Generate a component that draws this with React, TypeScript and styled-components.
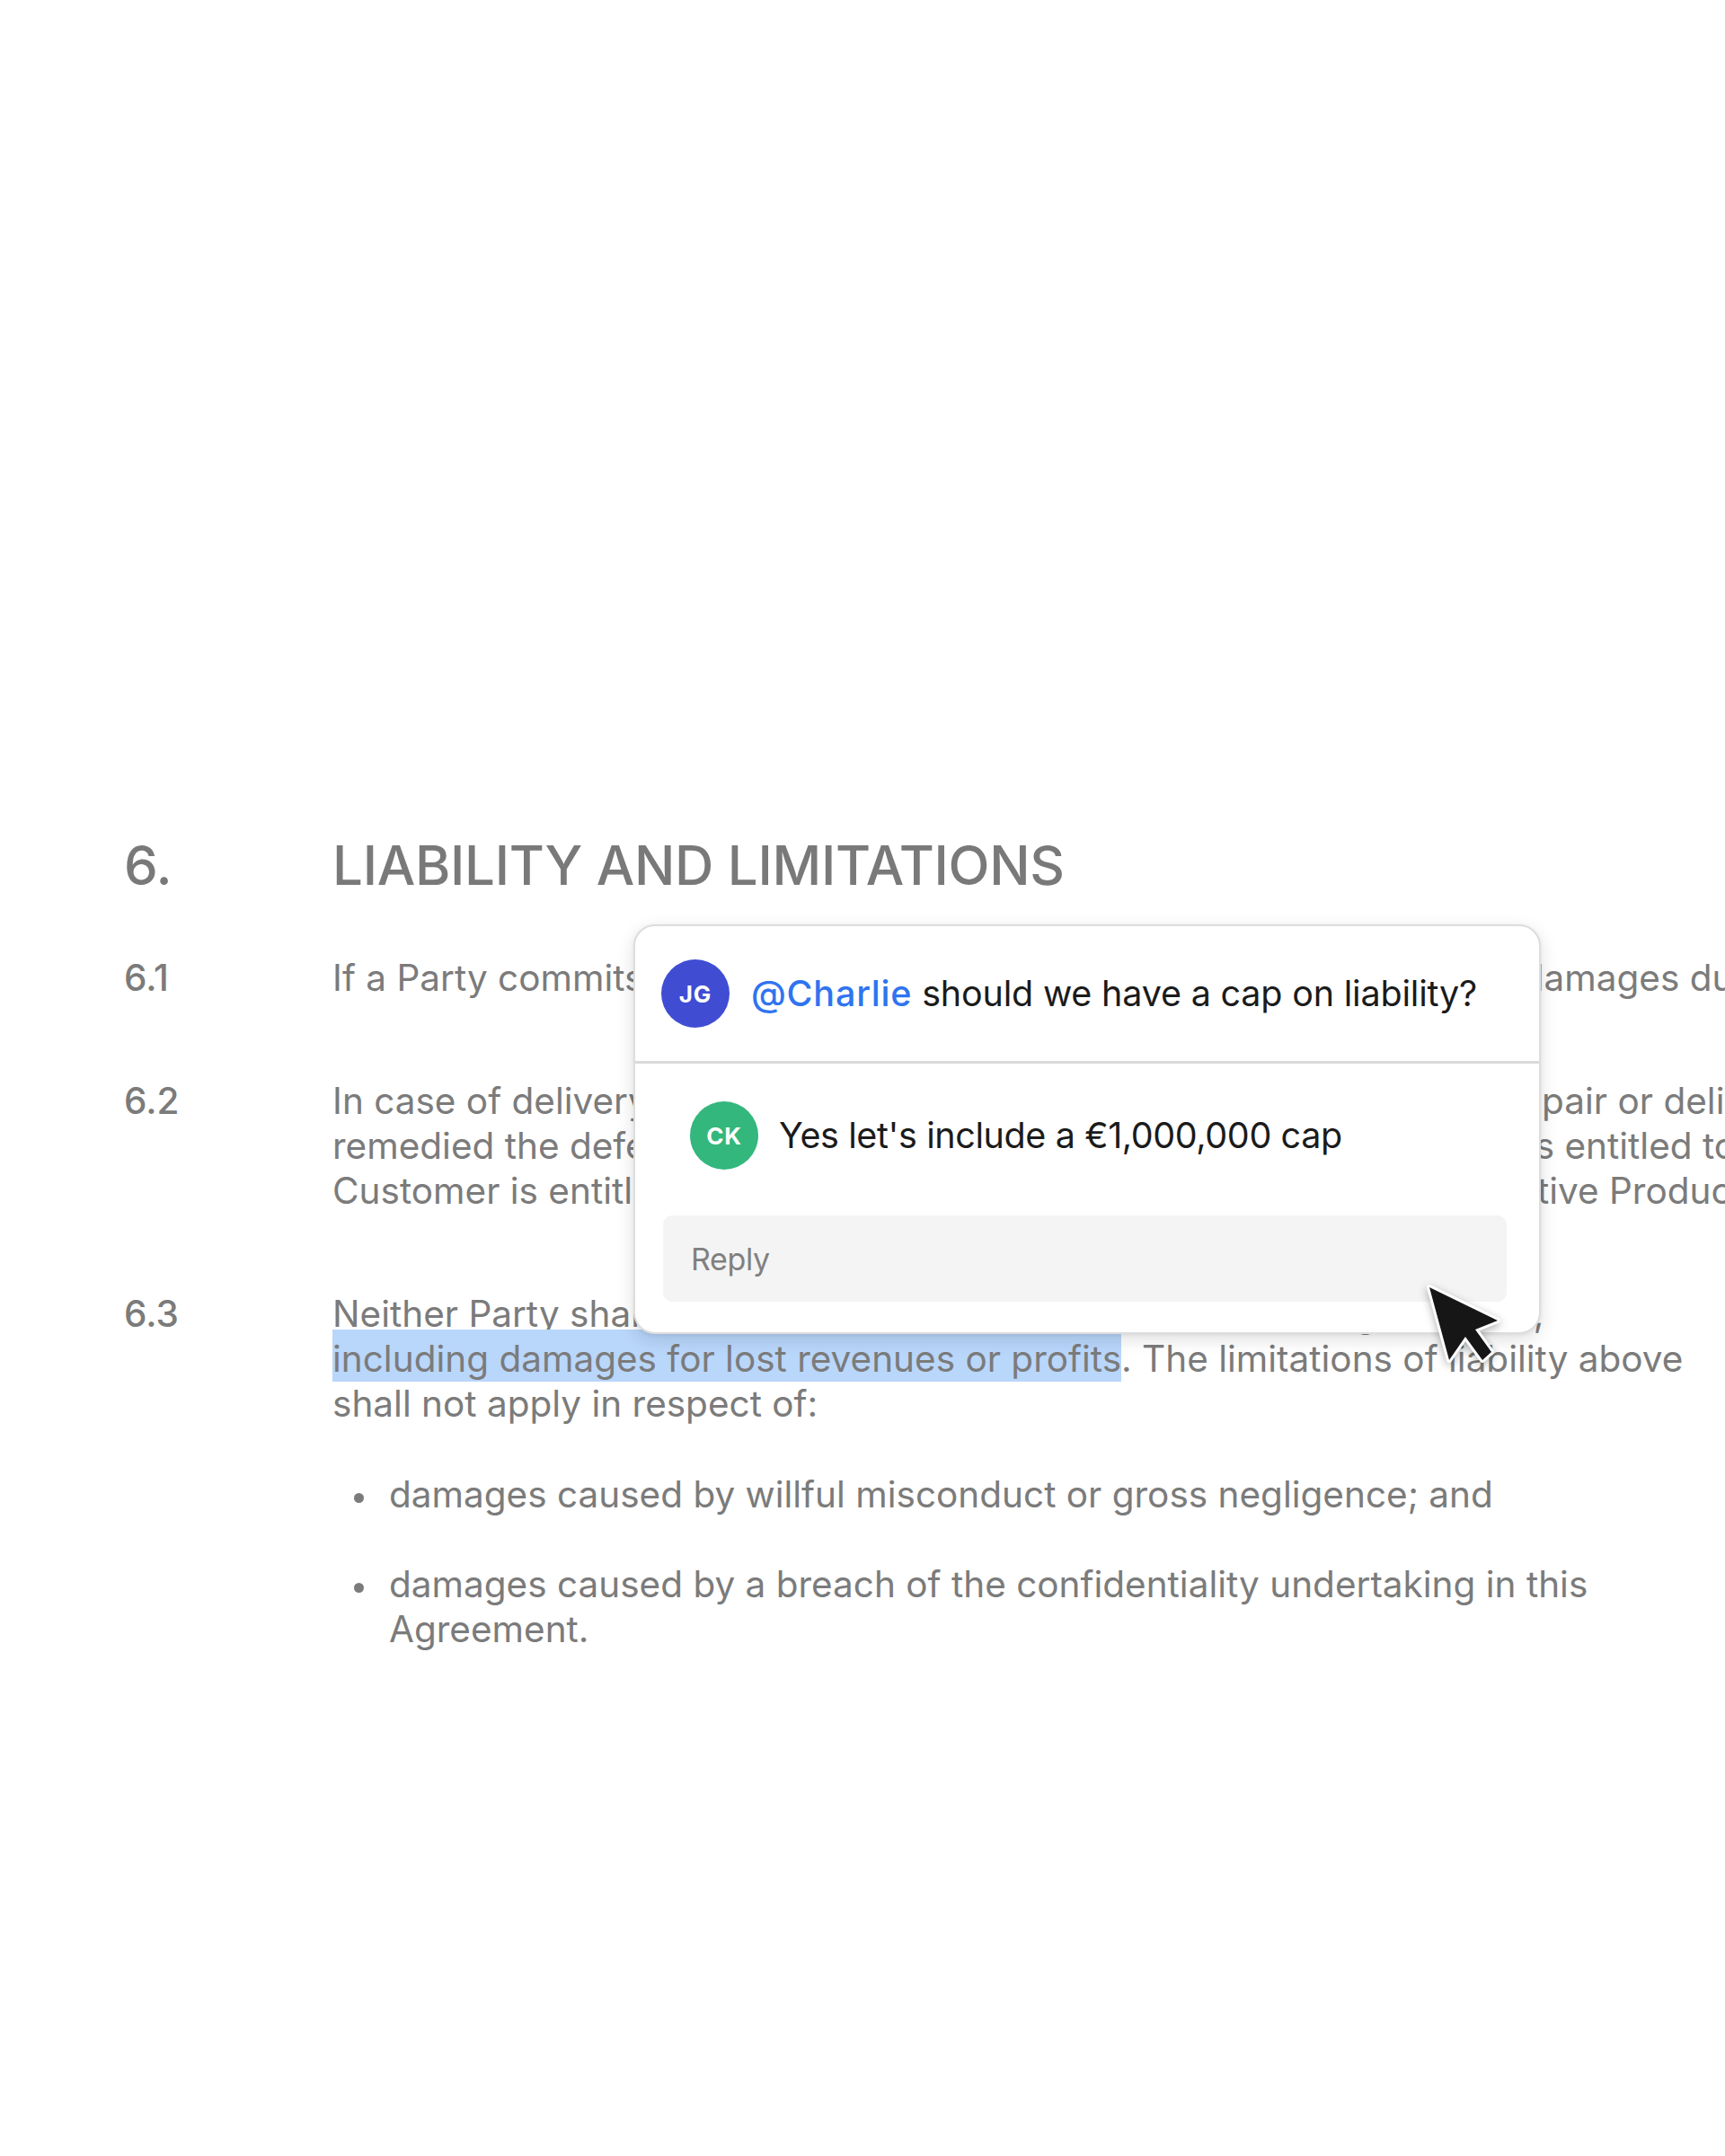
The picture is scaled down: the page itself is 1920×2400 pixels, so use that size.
import React from "react";
import styled, { createGlobalStyle } from "styled-components";

const Global = createGlobalStyle`
  html, body { margin: 0; padding: 0; background: #ffffff; }
  body { font-family: Inter, "Noto Sans", sans-serif; overflow: hidden; }
`;

const Page = styled.div`
  position: relative;
  width: 1920px;
  height: 2400px;
  overflow: hidden;
  background: #ffffff;
`;

const Doc = styled.div`
  padding: 928px 0 0 138px;
  color: #7b7b7b;
`;

const HeadingRow = styled.h1`
  margin: 0;
  display: grid;
  grid-template-columns: 232px max-content;
  font-size: 60px;
  line-height: 70px;
  font-weight: 500;
  color: #797979;
  letter-spacing: -0.005em;
`;

const Clause = styled.section<{ $gap: number }>`
  display: grid;
  grid-template-columns: 232px max-content;
  margin-top: ${(p) => p.$gap}px;
  font-size: 40.5px;
  line-height: 50px;
`;

const ClauseNum = styled.div`
  font-weight: 500;
  color: #7b7b7b;
`;

const ClauseBody = styled.div`
  display: flex;
  flex-direction: column;
`;

const Line = styled.div`
  white-space: nowrap;
`;

const Mark = styled.span`
  background: #b9d6fb;
  padding: 8px 0 1px;
`;

const List = styled.ul`
  list-style: none;
  margin: 51px 0 0;
  padding: 0;
  display: flex;
  flex-direction: column;
  gap: 50px;
`;

const Item = styled.li`
  display: grid;
  grid-template-columns: 63px max-content;
`;

const Dot = styled.span`
  width: 11px;
  height: 11px;
  border-radius: 50%;
  background: #7b7b7b;
  margin: 23px 0 0 24px;
`;

const Card = styled.div`
  position: absolute;
  left: 705px;
  top: 1029px;
  width: 1010px;
  height: 456px;
  box-sizing: border-box;
  border: 2px solid #dddddd;
  border-radius: 24px;
  background: #ffffff;
  box-shadow: 0 6px 20px rgba(0, 0, 0, 0.13), 0 1px 4px rgba(0, 0, 0, 0.06);
  overflow: hidden;
  display: flex;
  flex-direction: column;
`;

const CardTop = styled.div`
  height: 150px;
  display: flex;
  align-items: center;
  gap: 24px;
  padding-left: 29px;
  border-bottom: 3px solid #dadada;
`;

const CardBottom = styled.div`
  padding: 42px 36px 0 31px;
  display: flex;
  flex-direction: column;
`;

const ReplyRow = styled.div`
  display: flex;
  align-items: center;
  gap: 23px;
  padding-left: 30px;
`;

const Avatar = styled.div<{ $bg: string }>`
  width: 76px;
  height: 76px;
  flex: none;
  border-radius: 50%;
  background: ${(p) => p.$bg};
  color: #ffffff;
  display: flex;
  align-items: center;
  justify-content: center;
  font-size: 26px;
  font-weight: 700;
  letter-spacing: 0.03em;
`;

const Message = styled.div<{ $tracking: number }>`
  font-size: 39.5px;
  letter-spacing: ${(p) => p.$tracking}em;
  color: #1b1b1b;
  white-space: nowrap;
`;

const Mention = styled.span`
  color: #2f74f0;
  font-weight: 500;
  letter-spacing: 0.02em;
`;

const ReplyBox = styled.div`
  margin-top: 51px;
  height: 96px;
  border-radius: 10px;
  background: #f4f4f4;
  display: flex;
  align-items: center;
  padding-left: 31px;
  font-size: 34px;
  letter-spacing: -0.01em;
  color: #808080;
`;

const Cursor = styled.svg`
  position: absolute;
  left: 1580px;
  top: 1423px;
  width: 100px;
  height: 105px;
  overflow: visible;
  filter: drop-shadow(0 3px 5px rgba(0, 0, 0, 0.3));
`;

export default function App() {
  return (
    <Page>
      <Global />
      <Doc>
        <HeadingRow>
          <span>6.</span>
          <span>LIABILITY AND LIMITATIONS</span>
        </HeadingRow>

        <Clause $gap={66}>
          <ClauseNum>6.1</ClauseNum>
          <ClauseBody>
            <Line>If a Party commits a breach of the Agreement, the other Party claims damages due to the breach.</Line>
          </ClauseBody>
        </Clause>

        <Clause $gap={87}>
          <ClauseNum>6.2</ClauseNum>
          <ClauseBody>
            <Line>In case of delivery of a Defective Product, the Seller shall, promptly, repair or deliver a replacement Product.</Line>
            <Line>remedied the defect within a reasonable period of time the Customer is entitled to terminate the order.</Line>
            <Line>Customer is entitled to a full refund of the purchase price of the Defective Product concerned.</Line>
          </ClauseBody>
        </Clause>

        <Clause $gap={87}>
          <ClauseNum>6.3</ClauseNum>
          <ClauseBody>
            <Line>Neither Party shall be liable for any indirect or special damage, or loss,</Line>
            <Line>
              <Mark>including damages for lost revenues or profits</Mark>. The limitations of liability above
            </Line>
            <Line>shall not apply in respect of:</Line>
            <List>
              <Item>
                <Dot />
                <div>
                  <Line>damages caused by willful misconduct or gross negligence; and</Line>
                </div>
              </Item>
              <Item>
                <Dot />
                <div>
                  <Line>damages caused by a breach of the confidentiality undertaking in this</Line>
                  <Line>Agreement.</Line>
                </div>
              </Item>
            </List>
          </ClauseBody>
        </Clause>
      </Doc>

      <Card>
        <CardTop>
          <Avatar $bg="#404dd3">JG</Avatar>
          <Message $tracking={-0.005}>
            <Mention>@Charlie</Mention> should we have a cap on liability?
          </Message>
        </CardTop>
        <CardBottom>
          <ReplyRow>
            <Avatar $bg="#33b77d">CK</Avatar>
            <Message $tracking={-0.01}>Yes let's include a €1,000,000 cap</Message>
          </ReplyRow>
          <ReplyBox>Reply</ReplyBox>
        </CardBottom>
      </Card>

      <Cursor viewBox="0 0 100 105">
        <polygon
          points="11,10 87,47 62,57 80,82 70,91 51,65 33,91"
          fill="#161616"
          stroke="#ffffff"
          strokeWidth="6"
          strokeLinejoin="round"
          paintOrder="stroke"
        />
      </Cursor>
    </Page>
  );
}
